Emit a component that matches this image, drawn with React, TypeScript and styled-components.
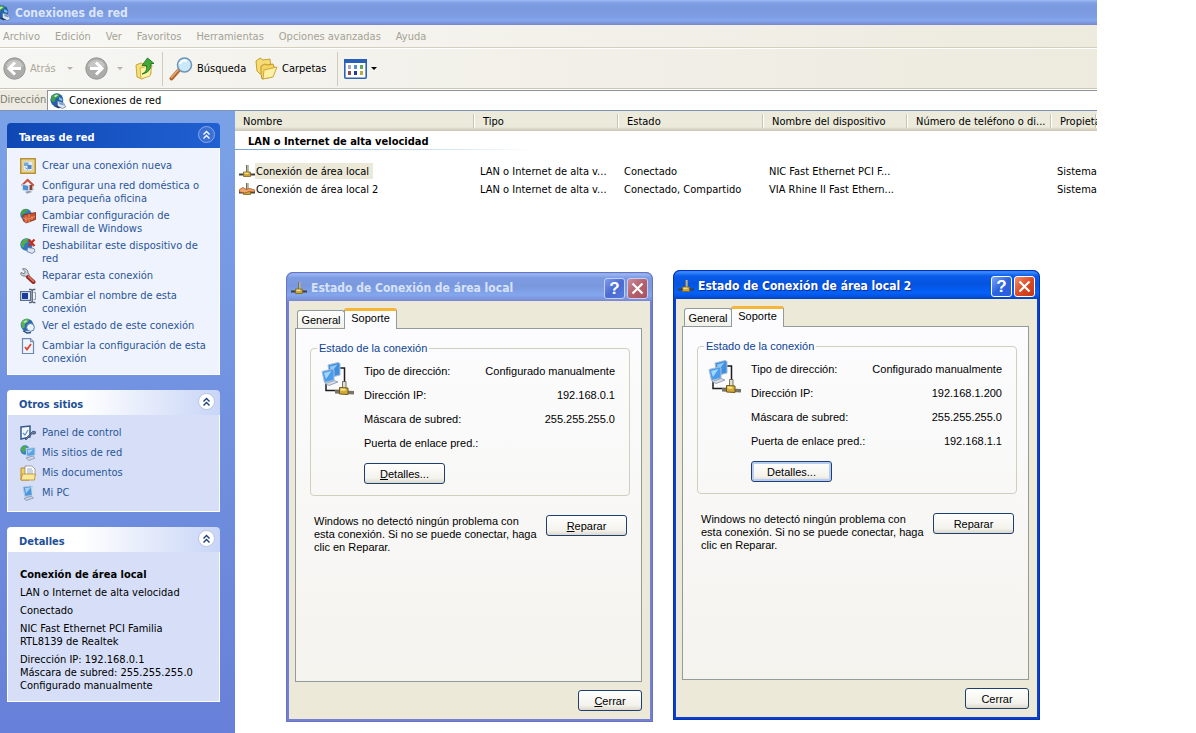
import React from "react";
import styled, { createGlobalStyle, css } from "styled-components";

const uiFont = `"DejaVu Sans Condensed", Tahoma, "Noto Sans", sans-serif`;
const dialogFont = `"Liberation Sans", Arial, sans-serif`;

const GlobalStyle = createGlobalStyle`
  * { box-sizing: border-box; }
  body { margin: 0; background: #fff; }
  button, input { font: inherit; color: inherit; }
  a { color: inherit; text-decoration: none; }
  svg { display: block; flex: none; }
`;

const Desktop = styled.div`
  position: relative;
  min-height: 100vh;
  padding-right: 99px;
  font-family: ${uiFont};
  font-size: 11px;
  line-height: 13px;
  color: #000;
  overflow: hidden;
`;

const Explorer = styled.div`
  display: flex;
  flex-direction: column;
  min-height: 100vh;
`;

const TitleBar = styled.header`
  display: flex;
  align-items: center;
  gap: 4px;
  height: 25px;
  overflow: hidden;
  background: linear-gradient(#9db9f5 0, #7f9ee4 3px, #7a98de 8px, #7c9be1 14px, #83a6ec 21px, #7d94dc 23px, #7587ca 25px);

  svg {
    margin-left: -5px;
  }
`;

const WindowTitle = styled.h1`
  margin: 0;
  font-size: 12px;
  line-height: 16px;
  font-weight: bold;
  color: #dce6fa;
`;

const MenuBar = styled.nav`
  display: flex;
  align-items: center;
  gap: 15px;
  height: 23px;
  padding-left: 3px;
  color: #a5a294;
  background: linear-gradient(90deg, #f8f8f6, #edeade);
  border-bottom: 1px solid #d2cfbf;
`;

const MenuItem = styled.button`
  padding: 0;
  border: 0;
  background: none;
`;

const ToolBar = styled.div`
  display: flex;
  align-items: center;
  height: 41px;
  padding-left: 3px;
  background: linear-gradient(90deg, #f6f6f3, #edeade);
  border-top: 1px solid #fff;
  border-bottom: 1px solid #c9c6b6;
`;

const ToolButton = styled.button<{ $muted?: boolean; $width: number }>`
  display: flex;
  align-items: center;
  gap: 4px;
  width: ${(p) => p.$width}px;
  padding: 0;
  border: 0;
  background: none;
  white-space: nowrap;
  color: ${(p) => (p.$muted ? "#aca899" : "#000")};
`;

const ForwardGroup = styled.div`
  display: flex;
  gap: 12px;
  margin-left: 12px;
`;

const Caret = styled.span<{ $muted?: boolean }>`
  margin-left: auto;
  border: 3px solid transparent;
  border-top-color: ${(p) => (p.$muted ? "#b5b2a6" : "#000")};
  border-bottom: 0;
`;

const Separator = styled.span`
  width: 1px;
  height: 34px;
  margin: 0 6px 0 7px;
  background: #cfccbe;
`;

const AddressBar = styled.div`
  display: flex;
  height: 22px;
  background: #edebe1;
  border-top: 1px solid #fff;
  border-bottom: 1px solid #7f93b5;
`;

const AddressLabel = styled.label`
  width: 47px;
  line-height: 20px;
  color: #7d7b71;
`;

const AddressField = styled.div`
  display: flex;
  align-items: center;
  flex: 1;
  gap: 3px;
  padding-left: 2px;
  background: #fff;
  border-top: 1px solid #8d9299;
  border-left: 1px solid #8d9299;
`;

const AddressInput = styled.input`
  flex: 1;
  min-width: 0;
  padding: 0;
  border: 0;
  outline: 0;
  background: none;
`;

const Content = styled.div`
  display: flex;
  flex: 1;
`;

const Sidebar = styled.aside`
  display: flex;
  flex-direction: column;
  gap: 15px;
  width: 235px;
  flex: none;
  padding: 12px 15px 12px 7px;
  background: linear-gradient(#7ba2e7, #6780d9);
  color: #2a5598;
`;

const PanelHead = styled.div<{ $primary?: boolean }>`
  display: flex;
  align-items: center;
  justify-content: space-between;
  height: 25px;
  padding: 0 5px 0 12px;
  border-radius: 4px 4px 0 0;
  ${(p) =>
    p.$primary
      ? css`
          color: #fff;
          background: linear-gradient(90deg, #0f48b4, #2160d2);
        `
      : css`
          color: #215098;
          background: linear-gradient(90deg, #fff 35%, #c8d5f7);
        `}
`;

const PanelTitle = styled.h2`
  margin: 0;
  padding-top: 3px;
  font-size: 11px;
  line-height: 13px;
`;

const Collapse = styled.button<{ $primary?: boolean }>`
  display: grid;
  place-items: center;
  width: 17px;
  height: 17px;
  margin-bottom: 2px;
  padding: 0;
  border-radius: 50%;
  border: 1px solid ${(p) => (p.$primary ? "#8aa9e8" : "#b9c4dc")};
  background: ${(p) => (p.$primary ? "#3c70d4" : "#fff")};
  color: ${(p) => (p.$primary ? "#fff" : "#1b3f7d")};
`;

const TaskList = styled.ul<{ $primary?: boolean }>`
  display: flex;
  flex-direction: column;
  gap: 3px;
  margin: 0;
  padding: 10px 12px 9px;
  list-style: none;
  background: ${(p) => (p.$primary ? "#eff3fe" : "#d6dff7")};
  border: 1px solid #fff;
  border-top: 0;
`;

const TaskLink = styled.a`
  display: flex;
  gap: 6px;
  min-height: 17px;
`;

const TaskText = styled.span`
  padding-top: 1px;
`;

const Details = styled.div`
  display: flex;
  flex-direction: column;
  gap: 5px;
  padding: 16px 12px 9px;
  color: #000;
  background: #d6dff7;
  border: 1px solid #fff;
  border-top: 0;
`;

const DetailText = styled.p`
  margin: 0;
`;

const ListArea = styled.main`
  flex: 1;
  min-width: 0;
  overflow: hidden;
  background: #fff;
`;

const Table = styled.table`
  width: 100%;
  table-layout: fixed;
  border-collapse: collapse;
`;

const Th = styled.th`
  height: 20px;
  padding: 0 0 0 8px;
  overflow: hidden;
  text-align: left;
  font-weight: normal;
  white-space: nowrap;
  background: linear-gradient(90deg, #c7c5b2 1px, #fff 1px, #fff 2px, transparent 2px) 100% 3px / 2px 14px no-repeat,
    linear-gradient(#ebeadb 16px, #d9d5c4 18px, #cbc7b8);
`;

const GroupCell = styled.th`
  height: 31px;
  padding: 3px 0 0;
  text-align: left;
  vertical-align: top;
`;

const GroupTitle = styled.div`
  height: 16px;
  padding-left: 13px;
  line-height: 15px;
  background: linear-gradient(90deg, #6fa5e0, #fff) 0 100% / 300px 1px no-repeat;
`;

const Td = styled.td`
  height: 18px;
  padding: 0 0 0 5px;
  overflow: hidden;
  white-space: nowrap;
`;

const ConnectionName = styled.div`
  display: flex;
  align-items: center;
  margin-left: -1px;
`;

const NameLabel = styled.span<{ $selected?: boolean }>`
  padding: 2px 4px 1px 1px;
  background: ${(p) => (p.$selected ? "#ece9d8" : "none")};
`;

const Dialog = styled.section<{ $active?: boolean; $x: number; $y: number }>`
  position: absolute;
  left: ${(p) => p.$x}px;
  top: ${(p) => p.$y}px;
  width: 367px;
  padding: 0 3px 3px;
  border-radius: 7px 7px 0 0;
  font-family: ${dialogFont};
  background: ${(p) =>
    p.$active
      ? "linear-gradient(#1c6bf0 0, #3a8bff 2px, #0a5be8 6px, #0454e0 14px, #0561fa 23px, #0450d8 27px, #0340be 29px, #0a3fd0 30px)"
      : "linear-gradient(#7b93dc 0, #9ab5f2 2px, #7d9be2 6px, #7a98de 14px, #83a6ec 23px, #7d94dc 27px, #7887cf 29px, #7480cd 30px)"};
  box-shadow: inset 0 0 0 1px ${(p) => (p.$active ? "#0831b4" : "#6674c2")};
`;

const DialogBar = styled.header`
  display: flex;
  align-items: center;
  gap: 2px;
  height: 29px;
  padding: 3px 2px 0;
`;

const DialogTitle = styled.h2<{ $active?: boolean }>`
  flex: 1;
  margin: 0 0 0 2px;
  font-family: ${uiFont};
  font-size: 12px;
  line-height: 16px;
  white-space: nowrap;
  color: ${(p) => (p.$active ? "#fff" : "#d8e2f8")};
  text-shadow: ${(p) => (p.$active ? "1px 1px #0a2f8c" : "none")};
`;

const CaptionButton = styled.button<{ $active?: boolean; $close?: boolean }>`
  display: grid;
  place-items: center;
  width: 21px;
  height: 21px;
  padding: 0;
  border: 1px solid ${(p) => (p.$active ? "#fff" : "#c3d0f3")};
  border-radius: 3px;
  background: ${(p) =>
    p.$close
      ? p.$active
        ? "linear-gradient(135deg, #f0906f, #dd4a24 50%, #c23512)"
        : "linear-gradient(135deg, #c98a9c, #b5616d 50%, #a9525f)"
      : p.$active
        ? "linear-gradient(135deg, #7da6f5, #2c62dd 50%, #2a5fe0)"
        : "linear-gradient(135deg, #7f9be9, #4a6bd3 50%, #5578da)"};
`;

const DialogBody = styled.div`
  display: flex;
  flex-direction: column;
  padding: 7px 8px 8px 6px;
  background: #ece9d8;
`;

const Tabs = styled.div`
  display: flex;
  align-items: flex-end;
  padding-left: 2px;
  margin-bottom: -1px;
`;

const Tab = styled.button<{ $selected?: boolean }>`
  border: 1px solid #919b9c;
  border-bottom: 0;
  border-radius: 3px 3px 0 0;
  ${(p) =>
    p.$selected
      ? css`
          z-index: 1;
          width: 53px;
          height: 21px;
          margin-left: -1px;
          padding: 0 0 3px;
          background: #fcfcfe;
          border-top: 3px solid #f5b536;
        `
      : css`
          width: 48px;
          height: 19px;
          padding: 0;
          background: linear-gradient(#fff, #f0f0ea);
        `}
`;

const TabPane = styled.div`
  min-height: 354px;
  padding: 12px 11px 0 14px;
  border: 1px solid #919b9c;
  background: linear-gradient(#fcfcfe, #f4f3ee);
`;

const Group = styled.fieldset`
  display: flex;
  gap: 9px;
  margin: 0;
  padding: 4px 14px 11px 10px;
  border: 1px solid #d0d0bf;
  border-radius: 4px;
`;

const Legend = styled.legend`
  margin-left: -4px;
  padding: 0 2px;
  line-height: 14px;
  color: #0c4294;
`;

const IconSlot = styled.div`
  width: 34px;
  padding-top: 3px;
`;

const Facts = styled.div`
  flex: 1;
`;

const FactList = styled.dl`
  display: grid;
  grid-template-columns: auto auto;
  grid-auto-rows: 24px;
  align-items: center;
  margin: 0 0 8px;
  dd {
    margin: 0;
    text-align: right;
  }
`;

const PushButton = styled.button<{ $width: number; $default?: boolean }>`
  width: ${(p) => p.$width}px;
  height: 21px;
  padding: 1px 0 0;
  border: 1px solid #1f3f70;
  border-radius: 3px;
  background: linear-gradient(#fff, #f3f2ec 75%, #dcd8cb);
  box-shadow: ${(p) => (p.$default ? "inset 0 0 0 2px #b5cdf2" : "none")};
`;

const RepairRow = styled.div`
  display: flex;
  justify-content: space-between;
  align-items: flex-start;
  margin: 19px 3px 0 4px;
`;

const RepairText = styled.p`
  width: 226px;
  margin: 0;
`;

const DialogFooter = styled.footer`
  display: flex;
  justify-content: flex-end;
  margin-top: 8px;
`;

type IconProps = { size?: number };

const GlobeIcon = ({ size = 16 }: IconProps) => (
  <svg width={size} height={size} viewBox="0 0 16 16" aria-hidden="true">
    <circle cx="6.800" cy="6.800" r="6.500" fill="#235fae" />
    <path d="M1.500 3.500C4 .6 8 .2 10 1.400L8.500 4 5.500 5.500 5 8.500 2.500 9C.6 7 .7 5 1.500 3.500z" fill="#3f9f48" />
    <path d="M3.500 3l3-1.500 1.500.8-2.500 2z" fill="#c4ecb4" />
    <path d="M9 4l3.500 2-.3 2-3-1z" fill="#7fc0ea" />
    <path d="M7.500 8l6 1.800L15.500 14l-3 1.500-5-2.200z" fill="#dfe6ee" stroke="#5b7191" strokeWidth=".7" />
    <path d="M8.800 9.200l4.200 1.300.9 2-4.200-1.200z" fill="#5e95d8" />
    <path d="M3 12.800l5 2.500 3-.4-3.500-2.200z" fill="#243f66" />
  </svg>
);

const NavArrow = ({ back }: { back?: boolean }) => (
  <svg width="23" height="23" viewBox="0 0 23 23" aria-hidden="true">
    <circle cx="11.500" cy="11.500" r="10.700" fill="#acacaa" stroke="#979795" />
    <path d="M3 9a9 9 0 0 1 17 0c-5 3-12 3-17 0z" fill="#c6c6c4" />
    <path
      d={back ? "M12 5.500L6 11.500l6 6M6.500 11.500H18" : "M11 5.500l6 6-6 6M16.500 11.500H5"}
      fill="none"
      stroke="#fff"
      strokeWidth="3"
    />
  </svg>
);

const UpFolderIcon = () => (
  <svg width="20" height="23" viewBox="0 0 20 23" aria-hidden="true">
    <path d="M1 8l5-2 2 1 7-1 1 11-9 5-5-2z" fill="#f4e07c" stroke="#c9a536" />
    <path d="M5 11l12-3-2 11-9 3z" fill="#fdf3a8" stroke="#d3b246" />
    <path d="M7 17c4-2 5-4 4.500-8.500H7L12.500 1 19 6.500h-3C16.500 12 13 16 7 17z" fill="#3fa93a" stroke="#1f7422" strokeWidth=".9" />
  </svg>
);

const SearchIcon = () => (
  <svg width="24" height="24" viewBox="0 0 24 24" aria-hidden="true">
    <path d="M2.500 21.500l7.500-8.500" stroke="#b5652a" strokeWidth="4" strokeLinecap="round" />
    <path d="M2 21l8-9" stroke="#e6b27c" strokeWidth="1.200" />
    <circle cx="15.500" cy="8" r="7" fill="#c9e8f8" stroke="#6f93b8" strokeWidth="1.500" />
    <path d="M11 7c1-3 4-4.500 7-3" fill="none" stroke="#fff" strokeWidth="2" />
  </svg>
);

const FoldersIcon = () => (
  <svg width="23" height="23" viewBox="0 0 23 23" aria-hidden="true">
    <path d="M1 4l4-3 3 2 7-1 1 10-11 5-3-3z" fill="#f6dc75" stroke="#c99f2f" />
    <path d="M6 9l4-2 2 1 6-1 1 3 2 1-4 9-10 2-1-5z" fill="#f4d562" stroke="#c0942a" />
    <path d="M9 13l13-3-4 10-10 2z" fill="#fdf1a8" stroke="#cfa736" />
  </svg>
);

const ViewsIcon = () => (
  <svg width="23" height="20" viewBox="0 0 23 20" aria-hidden="true">
    <rect x=".8" y=".8" width="21.400" height="18.400" rx="1" fill="#fff" stroke="#2a62b4" strokeWidth="1.600" />
    <path d="M0 0h23v4H0z" fill="#2860b8" />
    <path d="M4 6h3v4H4z" fill="#a3a9ba" />
    <path d="M10 6h3v4h-3z" fill="#5c8bd0" />
    <path d="M16 6h3v4h-3z" fill="#5fa852" />
    <path d="M4 12h3v4H4z" fill="#8d4a52" />
    <path d="M10 12h3v4h-3z" fill="#1c3f8c" />
    <path d="M16 12h3v4h-3z" fill="#c3a83c" />
  </svg>
);

const ChevronsUp = () => (
  <svg width="9" height="10" viewBox="0 0 9 10" aria-hidden="true">
    <path d="M1.500 4.500l3-3 3 3M1.500 8.500l3-3 3 3" fill="none" stroke="currentColor" strokeWidth="1.400" />
  </svg>
);

const NewConnectionIcon = () => (
  <svg width="16" height="16" viewBox="0 0 16 16" aria-hidden="true">
    <rect x=".8" y=".8" width="14.400" height="14.400" fill="#f5e6a6" stroke="#b48a2c" strokeWidth="1.500" />
    <rect x="3" y="3" width="10" height="10" fill="#e3ecf5" stroke="#cfae58" strokeWidth=".7" />
    <path d="M4 4.500h4.500v3.500H4z" fill="#7aa8d6" />
    <path d="M7.500 7h4v4h-4z" fill="#4f88c2" />
    <path d="M5 9.500l3 2" stroke="#7da7cf" />
  </svg>
);

const HomeNetworkIcon = () => (
  <svg width="16" height="16" viewBox="0 0 16 16" aria-hidden="true">
    <path d="M3 6l5-5 5 5v6H3z" fill="#f1f4f8" stroke="#a9b3c2" strokeWidth=".7" />
    <path d="M1 7L7.500.6 14.500 7l-1.500 1.200L7.500 3.500 2.500 8.200z" fill="#c9503e" />
    <path d="M9.500 7h2.800v5H9.500z" fill="#8d4131" />
    <path d="M2.500 6.500l6 1v5.500l-6-1z" fill="#4b8fd4" stroke="#d5dfeb" strokeWidth=".8" />
    <path d="M5 13.800l5-1 2 1.300-5 1.700z" fill="#8f9db2" />
  </svg>
);

const FirewallIcon = () => (
  <svg width="16" height="16" viewBox="0 0 16 16" aria-hidden="true">
    <circle cx="6" cy="6.500" r="5.700" fill="#357ac9" />
    <path d="M.6 6C1 2.500 4 .4 8 1.200L6.500 4 4 5 3 8z" fill="#48a243" />
    <path d="M3 7l12.500-2.500v7L6 15l-3-2.500z" fill="#c9552f" stroke="#7a2c16" strokeWidth=".8" />
    <path d="M3 9.500l3 2 9-2.800M6 8.500V15M9 6v3.500M12 8v3.800M9 11.500V14" fill="none" stroke="#f3a070" strokeWidth=".8" />
  </svg>
);

const DisableIcon = () => (
  <svg width="16" height="16" viewBox="0 0 16 16" aria-hidden="true">
    <circle cx="6.500" cy="6.500" r="6.200" fill="#3176c6" />
    <path d="M.8 6C1.500 2 5 0 8.500 1L7 4.500 4.500 6 4 9 2 9.500z" fill="#4fae4a" />
    <path d="M7.500 9.500l6.500 1 1 3-3 2-5-2z" fill="#dbe5f0" stroke="#4a6a92" strokeWidth=".7" />
    <path d="M8.500 1.500l6 6.500M14.500 1.500l-6 6.500" stroke="#c7301f" strokeWidth="2.200" />
  </svg>
);

const WrenchIcon = () => (
  <svg width="16" height="16" viewBox="0 0 16 16" aria-hidden="true">
    <path d="M2.500.8l2.700 3-1 2L1 4.500C0 6.500 2 8.500 5 8l2 1.500L9.500 7 8 5C8.500 2 5.500 0 2.500.8z" fill="#cdd2d8" stroke="#6b727c" strokeWidth=".9" />
    <path d="M8 9l5.500 5" stroke="#8e2a20" strokeWidth="4" strokeLinecap="round" />
    <path d="M8.500 8.700l5 4.700" stroke="#e47060" strokeWidth="1.600" strokeLinecap="round" />
  </svg>
);

const RenameIcon = () => (
  <svg width="16" height="16" viewBox="0 0 16 16" aria-hidden="true">
    <path d="M.6 3.600h10v8.800H.6z" fill="#e6ebf3" stroke="#5b6f94" strokeWidth="1.200" />
    <path d="M2 5h6v6H2z" fill="#1b3c9c" />
    <path d="M9 1.500h2l1.200 1 1.200-1h2M12.200 2.500v11M9 14.500h2l1.200-1 1.200 1h2" fill="none" stroke="#5a6274" strokeWidth="1.400" />
    <path d="M13.500 4.500h2v7h-2" fill="none" stroke="#8d98ac" />
  </svg>
);

const StatusIcon = () => (
  <svg width="16" height="16" viewBox="0 0 16 16" aria-hidden="true">
    <circle cx="7" cy="7" r="6.300" fill="#2f68b2" />
    <path d="M1 6.500C1.500 2 5 0 9.500 1.200L7.500 4.500 5 6 4.500 10 2.500 10.500z" fill="#58b25a" />
    <path d="M3 4l3-1.800 1.500.6L5 5z" fill="#c4ecb4" />
    <circle cx="10.500" cy="9.400" r="3.900" fill="#eaf3fa" stroke="#4f78b0" />
    <path d="M3 12.800l4 2.200 4-.3" fill="none" stroke="#27466f" strokeWidth="1.300" />
  </svg>
);

const SettingsSheetIcon = () => (
  <svg width="16" height="16" viewBox="0 0 16 16" aria-hidden="true">
    <path d="M2.500.7h8l3 3v11.800h-11z" fill="#eef4fb" stroke="#6d87ae" strokeWidth="1.200" />
    <path d="M10.500.7v3h3" fill="#c5d5ea" stroke="#6d87ae" />
    <path d="M5 9l2 2.500 4-5.500" fill="none" stroke="#d8442f" strokeWidth="1.800" />
  </svg>
);

const ControlPanelIcon = () => (
  <svg width="16" height="16" viewBox="0 0 16 16" aria-hidden="true">
    <path d="M1 2l9-1v11l-9 2z" fill="#f3f7fc" stroke="#34588f" strokeWidth="1.500" />
    <path d="M3 8l2 2 3-5" fill="none" stroke="#5b93cf" strokeWidth="1.200" />
    <path d="M5 14l5-5 3-3 3 1-1 2h-3l-6 6z" fill="#6b7fa3" stroke="#2e4670" strokeWidth=".7" />
  </svg>
);

const NetworkPlacesIcon = () => (
  <svg width="16" height="16" viewBox="0 0 16 16" aria-hidden="true">
    <circle cx="5" cy="5" r="4.700" fill="#3a80cc" />
    <path d="M.6 5C1 2 4 0 7 1L5.500 4 4 8z" fill="#4dab49" />
    <path d="M6 3.500l9-1v8l-8 1z" fill="#5aa2e6" stroke="#c5d4e6" />
    <path d="M7.500 5l6-.8-5 4.500z" fill="#a9d2f7" />
    <path d="M6 13l7-2 2 2-6 2.500z" fill="#cdd6e3" stroke="#7b8ba3" strokeWidth=".7" />
  </svg>
);

const DocumentsIcon = () => (
  <svg width="16" height="16" viewBox="0 0 16 16" aria-hidden="true">
    <path d="M1 3h4l1 1h3v11H1z" fill="#f1cf62" stroke="#b58b2a" />
    <path d="M5 1h7l3 3v7H5z" fill="#fff" stroke="#8c8c8c" strokeWidth=".8" />
    <path d="M7 4h5M7 6h6M7 8h6" stroke="#7793bd" strokeWidth=".8" />
    <path d="M2.500 9h12.800l-.8 6H1z" fill="#fbe898" stroke="#b58b2a" strokeWidth=".8" />
  </svg>
);

const ComputerIcon = () => (
  <svg width="16" height="16" viewBox="0 0 16 16" aria-hidden="true">
    <path d="M3 2l8-1 2 1v8l-8 1.500z" fill="#4d97e2" stroke="#b4c6dc" />
    <path d="M5 3l6-.8-5 6z" fill="#a5d0f8" />
    <path d="M11 1.500l3 1v8l-2 1z" fill="#d5dde8" />
    <path d="M4 13.500l7-2.500 2.500 2-7 2.500z" fill="#c7d1df" stroke="#7789a5" strokeWidth=".7" />
  </svg>
);

const PlugIcon = ({ shared }: { shared?: boolean }) => (
  <svg width="16" height="16" viewBox="0 0 16 16" aria-hidden="true">
    <path d="M7 2h2.500v7H7z" fill="#6e6f66" />
    <path d="M8.200 2h1.300v7H8.200z" fill="#c9c6a4" />
    <path d="M0 10.500h16v2H0z" fill="#3d3f3e" />
    <path d="M4.500 9h7v4.500h-7z" fill="#caa436" stroke="#7d6420" strokeWidth=".8" />
    <path d="M5.500 9.600h4v1.500h-4z" fill="#f6e08c" />
    {shared && <path d="M.5 8.500L4 6.500l3 2 4-1 4.500 1.500V11L10 10.500 6 12l-5.500-1z" fill="#f0a468" stroke="#a85524" strokeWidth=".8" />}
  </svg>
);

const LinkedComputersIcon = () => (
  <svg width="34" height="36" viewBox="0 0 34 36" aria-hidden="true">
    <path d="M17 6h6.500v15M5 22v6.500h13" fill="none" stroke="#1d1d1d" strokeWidth="1.500" />
    <path d="M7 3l10-2.500 2 1V13L9 15.500z" fill="#3f8fe0" stroke="#a9bdd4" />
    <path d="M9 4.500l7.500-2L10 11z" fill="#8fc9fb" />
    <path d="M1 9.500L11 7l2 1v10L3.500 20.500z" fill="#4a9cec" stroke="#a9bdd4" />
    <path d="M3 11l7.500-2L5 17z" fill="#a3d6ff" />
    <path d="M4 21.500l9-3 4 1.500-9 3.500z" fill="#d5dce6" stroke="#8796ab" strokeWidth=".8" />
    <path d="M21.500 19.500H25V27h-3.500z" fill="#e4e2cf" stroke="#55544a" strokeWidth=".8" />
    <path d="M14 28l19 1v3.500l-19-1z" fill="#77756a" />
    <path d="M18.500 25.500l8.500.5v6.500l-8.500-.5z" fill="#d3aa35" stroke="#73591a" />
    <path d="M19.500 26.500l5 .3v2l-5-.3z" fill="#fbe791" />
  </svg>
);

const QuestionGlyph = styled.span`
  font-family: ${dialogFont};
  font-size: 17px;
  line-height: 19px;
  font-weight: bold;
  color: #fff;
`;

const CloseGlyph = () => (
  <svg width="13" height="13" viewBox="0 0 13 13" aria-hidden="true">
    <path d="M1.500 1.500l10 10M11.500 1.500l-10 10" stroke="#fff" strokeWidth="2.200" />
  </svg>
);

const menus = ["Archivo", "Edición", "Ver", "Favoritos", "Herramientas", "Opciones avanzadas", "Ayuda"];

const networkTasks = [
  { text: "Crear una conexión nueva", icon: <NewConnectionIcon /> },
  { text: "Configurar una red doméstica o para pequeña oficina", icon: <HomeNetworkIcon /> },
  { text: "Cambiar configuración de Firewall de Windows", icon: <FirewallIcon /> },
  { text: "Deshabilitar este dispositivo de red", icon: <DisableIcon /> },
  { text: "Reparar esta conexión", icon: <WrenchIcon /> },
  { text: "Cambiar el nombre de esta conexión", icon: <RenameIcon /> },
  { text: "Ver el estado de este conexión", icon: <StatusIcon /> },
  { text: "Cambiar la configuración de esta conexión", icon: <SettingsSheetIcon /> },
];

const places = [
  { text: "Panel de control", icon: <ControlPanelIcon /> },
  { text: "Mis sitios de red", icon: <NetworkPlacesIcon /> },
  { text: "Mis documentos", icon: <DocumentsIcon /> },
  { text: "Mi PC", icon: <ComputerIcon /> },
];

const columns = [
  { title: "Nombre", width: 240 },
  { title: "Tipo", width: 144 },
  { title: "Estado", width: 145 },
  { title: "Nombre del dispositivo", width: 144 },
  { title: "Número de teléfono o di...", width: 144 },
  { title: "Propietario" },
];

const connections = [
  { name: "Conexión de área local", status: "Conectado", device: "NIC Fast Ethernet PCI F...", selected: true },
  { name: "Conexión de área local 2", status: "Conectado, Compartido", device: "VIA Rhine II Fast Ethern...", shared: true },
];

type PanelProps = { title: string; primary?: boolean; children: React.ReactNode };

const Panel = ({ title, primary, children }: PanelProps) => (
  <section>
    <PanelHead $primary={primary}>
      <PanelTitle>{title}</PanelTitle>
      <Collapse $primary={primary} aria-label={`Contraer ${title}`}>
        <ChevronsUp />
      </Collapse>
    </PanelHead>
    {children}
  </section>
);

type Task = { text: string; icon: React.ReactNode };

const Tasks = ({ items, primary }: { items: Task[]; primary?: boolean }) => (
  <TaskList $primary={primary}>
    {items.map((item) => (
      <li key={item.text}>
        <TaskLink href="#">
          {item.icon}
          <TaskText>{item.text}</TaskText>
        </TaskLink>
      </li>
    ))}
  </TaskList>
);

const Mnemonic = ({ text, underline }: { text: string; underline?: boolean }) =>
  underline ? (
    <>
      <u>{text[0]}</u>
      {text.slice(1)}
    </>
  ) : (
    <>{text}</>
  );

type StatusProps = { title: string; x: number; y: number; active?: boolean; ip: string; gateway: string };

const StatusDialog = ({ title, x, y, active, ip, gateway }: StatusProps) => (
  <Dialog $active={active} $x={x} $y={y} role="dialog" aria-label={title}>
    <DialogBar>
      <PlugIcon />
      <DialogTitle $active={active}>{title}</DialogTitle>
      <CaptionButton $active={active} aria-label="Ayuda">
        <QuestionGlyph>?</QuestionGlyph>
      </CaptionButton>
      <CaptionButton $active={active} $close aria-label="Cerrar ventana">
        <CloseGlyph />
      </CaptionButton>
    </DialogBar>
    <DialogBody>
      <Tabs role="tablist">
        <Tab role="tab" aria-selected={false}>General</Tab>
        <Tab role="tab" aria-selected $selected>Soporte</Tab>
      </Tabs>
      <TabPane role="tabpanel">
        <Group>
          <Legend>Estado de la conexión</Legend>
          <IconSlot>
            <LinkedComputersIcon />
          </IconSlot>
          <Facts>
            <FactList>
              <dt>Tipo de dirección:</dt>
              <dd>Configurado manualmente</dd>
              <dt>Dirección IP:</dt>
              <dd>{ip}</dd>
              <dt>Máscara de subred:</dt>
              <dd>255.255.255.0</dd>
              <dt>Puerta de enlace pred.:</dt>
              <dd>{gateway}</dd>
            </FactList>
            <PushButton $width={81} $default={active}>
              <Mnemonic text="Detalles..." underline={!active} />
            </PushButton>
          </Facts>
        </Group>
        <RepairRow>
          <RepairText>
            Windows no detectó ningún problema con esta conexión. Si no se puede conectar, haga clic en Reparar.
          </RepairText>
          <PushButton $width={81}>
            <Mnemonic text="Reparar" underline={!active} />
          </PushButton>
        </RepairRow>
      </TabPane>
      <DialogFooter>
        <PushButton $width={64}>
          <Mnemonic text="Cerrar" underline={!active} />
        </PushButton>
      </DialogFooter>
    </DialogBody>
  </Dialog>
);

export default function App() {
  return (
    <Desktop>
      <GlobalStyle />
      <Explorer>
        <TitleBar>
          <GlobeIcon />
          <WindowTitle>Conexiones de red</WindowTitle>
        </TitleBar>
        <MenuBar>
          {menus.map((menu) => (
            <MenuItem key={menu}>{menu}</MenuItem>
          ))}
        </MenuBar>
        <ToolBar>
          <ToolButton $width={70} $muted>
            <NavArrow back />
            Atrás
            <Caret $muted />
          </ToolButton>
          <ForwardGroup>
            <ToolButton $width={38} $muted aria-label="Adelante">
              <NavArrow />
              <Caret $muted />
            </ToolButton>
            <ToolButton $width={20} aria-label="Arriba">
              <UpFolderIcon />
            </ToolButton>
          </ForwardGroup>
          <Separator />
          <ToolButton $width={86}>
            <SearchIcon />
            Búsqueda
          </ToolButton>
          <ToolButton $width={75}>
            <FoldersIcon />
            Carpetas
          </ToolButton>
          <Separator />
          <ToolButton $width={32} aria-label="Vistas">
            <ViewsIcon />
            <Caret />
          </ToolButton>
        </ToolBar>
        <AddressBar>
          <AddressLabel htmlFor="address">Dirección</AddressLabel>
          <AddressField>
            <GlobeIcon />
            <AddressInput id="address" defaultValue="Conexiones de red" />
          </AddressField>
        </AddressBar>
        <Content>
          <Sidebar>
            <Panel title="Tareas de red" primary>
              <Tasks items={networkTasks} primary />
            </Panel>
            <Panel title="Otros sitios">
              <Tasks items={places} />
            </Panel>
            <Panel title="Detalles">
              <Details>
                <DetailText>
                  <b>Conexión de área local</b>
                </DetailText>
                <DetailText>LAN o Internet de alta velocidad</DetailText>
                <DetailText>Conectado</DetailText>
                <DetailText>
                  NIC Fast Ethernet PCI Familia
                  <br />
                  RTL8139 de Realtek
                </DetailText>
                <DetailText>
                  Dirección IP: 192.168.0.1
                  <br />
                  Máscara de subred: 255.255.255.0
                  <br />
                  Configurado manualmente
                </DetailText>
              </Details>
            </Panel>
          </Sidebar>
          <ListArea>
            <Table>
              <colgroup>
                {columns.map((column) => (
                  <col key={column.title} width={column.width} />
                ))}
              </colgroup>
              <thead>
                <tr>
                  {columns.map((column) => (
                    <Th key={column.title} scope="col">
                      {column.title}
                    </Th>
                  ))}
                </tr>
              </thead>
              <tbody>
                <tr>
                  <GroupCell colSpan={6} scope="rowgroup">
                    <GroupTitle>LAN o Internet de alta velocidad</GroupTitle>
                  </GroupCell>
                </tr>
                {connections.map((row) => (
                  <tr key={row.name}>
                    <Td>
                      <ConnectionName>
                        <PlugIcon shared={row.shared} />
                        <NameLabel $selected={row.selected}>{row.name}</NameLabel>
                      </ConnectionName>
                    </Td>
                    <Td>LAN o Internet de alta v...</Td>
                    <Td>{row.status}</Td>
                    <Td>{row.device}</Td>
                    <Td />
                    <Td>Sistema</Td>
                  </tr>
                ))}
              </tbody>
            </Table>
          </ListArea>
        </Content>
      </Explorer>
      <StatusDialog title="Estado de Conexión de área local" x={286} y={272} ip="192.168.0.1" gateway="" />
      <StatusDialog title="Estado de Conexión de área local 2" x={673} y={270} active ip="192.168.1.200" gateway="192.168.1.1" />
    </Desktop>
  );
}
